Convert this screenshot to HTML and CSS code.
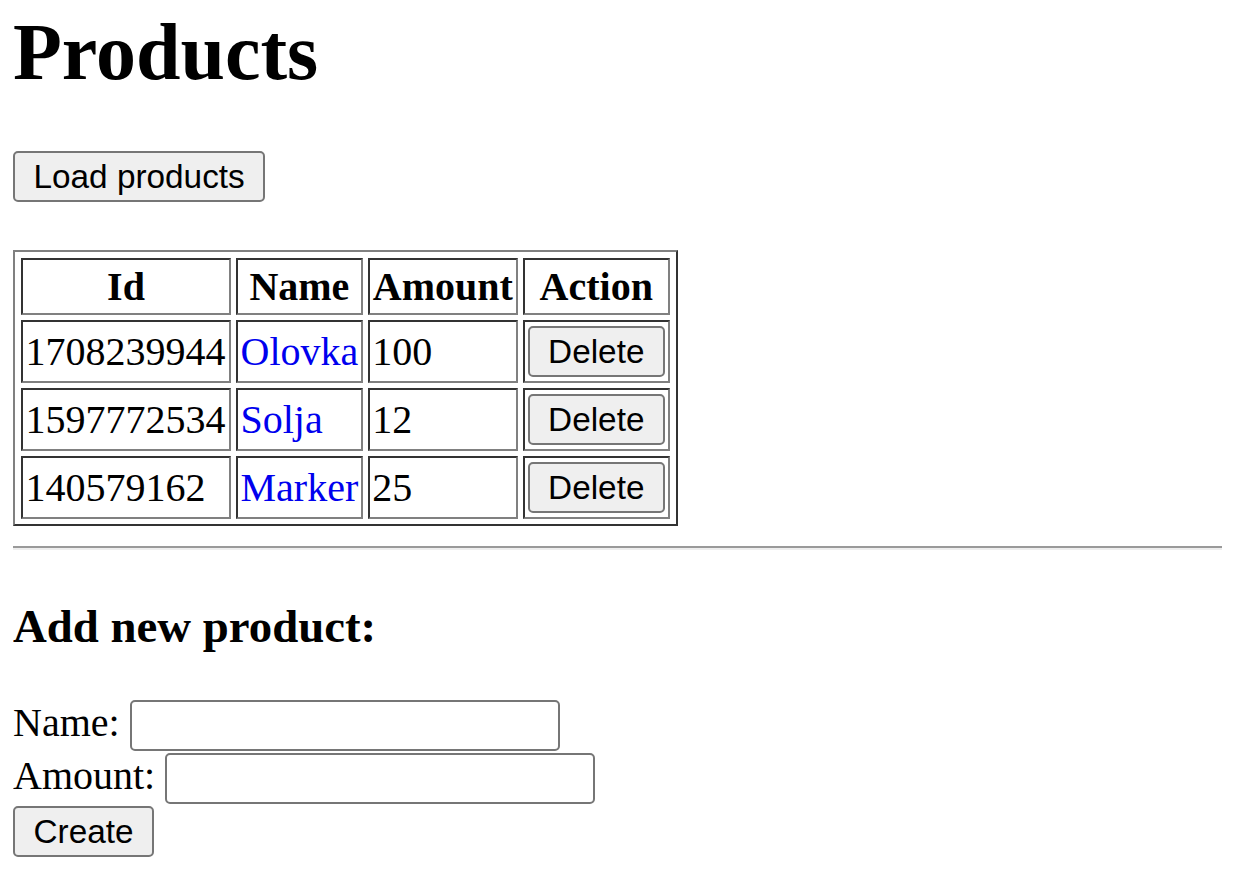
FILE: index.html
```html
<!DOCTYPE html>
<html lang="en">
<head>
<meta charset="utf-8">
<title>Products</title>
<link rel="stylesheet" href="styles.css">
</head>
<body>
<h1 class="title">Products</h1>
<div class="load-row">
  <button class="btn" type="button">Load products</button>
</div>
<table class="products">
  <thead>
    <tr>
      <th class="col-id">Id</th>
      <th class="col-name">Name</th>
      <th class="col-amount">Amount</th>
      <th class="col-action">Action</th>
    </tr>
  </thead>
  <tbody>
    <tr>
      <td>1708239944</td>
      <td><a class="name-link" href="#">Olovka</a></td>
      <td>100</td>
      <td><button class="btn" type="button">Delete</button></td>
    </tr>
    <tr>
      <td>1597772534</td>
      <td><a class="name-link" href="#">Solja</a></td>
      <td>12</td>
      <td><button class="btn" type="button">Delete</button></td>
    </tr>
    <tr>
      <td>140579162</td>
      <td><a class="name-link" href="#">Marker</a></td>
      <td>25</td>
      <td><button class="btn" type="button">Delete</button></td>
    </tr>
  </tbody>
</table>
<hr class="divider">
<h3 class="subtitle">Add new product:</h3>
<form class="add-form">
  <div class="field">
    <label class="field-label" for="name">Name:</label>
    <input class="field-input" id="name" type="text">
  </div>
  <div class="field">
    <label class="field-label" for="amount">Amount:</label>
    <input class="field-input" id="amount" type="text">
  </div>
  <div class="field">
    <button class="btn" type="button">Create</button>
  </div>
</form>
</body>
</html>
```

FILE: styles.css
```css
html {
  background: #ffffff;
}

body {
  margin: 0 13px;
  font-family: "Liberation Serif", "Times New Roman", serif;
  font-size: 40px;
  color: #000000;
}

.title {
  margin: 6px 0 0;
  font-size: 80px;
  line-height: 92px;
  font-weight: bold;
}

.load-row {
  display: flex;
  margin-top: 53px;
}

.btn {
  box-sizing: border-box;
  height: 51px;
  padding: 0 18.5px;
  font-family: "Liberation Sans", Arial, sans-serif;
  font-size: 33.33px;
  line-height: normal;
  color: #000000;
  background: #efefef;
  border: 2px solid #767676;
  border-radius: 5px;
}

.products {
  margin-top: 48px;
  border-collapse: separate;
  border-spacing: 5px;
  border-style: solid;
  border-width: 2px;
  border-color: #808080 #333333 #333333 #808080;
  padding: 1px 1px 0 1px;
}

.products th,
.products td {
  padding: 3.5px 2.5px;
  border-style: solid;
  border-width: 2px;
  border-color: #333333 #808080 #808080 #333333;
  line-height: 46px;
  vertical-align: middle;
}

.products td {
  padding-top: 4px;
  padding-bottom: 4px;
  text-align: left;
}

.products th {
  font-weight: bold;
  text-align: center;
}

.col-id {
  width: 201px;
}

.col-name {
  width: 117px;
}

.col-amount {
  width: 141px;
}

.col-action {
  width: 138px;
}

.products .btn {
  display: block;
  margin: 0 auto;
}

.name-link {
  color: #0000ee;
  text-decoration: none;
}

.divider {
  margin: 20px 0 0;
  height: 0;
  border: none;
  border-top: 2px solid #9a9a9a;
  border-bottom: 2px solid #eeeeee;
}

.subtitle {
  margin: 49px 0 0;
  font-size: 46.8px;
  line-height: 54px;
  font-weight: bold;
}

.add-form {
  margin-top: 47px;
  display: flex;
  flex-direction: column;
  gap: 2px;
}

.field {
  display: flex;
  align-items: flex-start;
  gap: 10px;
}

.field-label {
  line-height: 46px;
}

.field-input {
  box-sizing: border-box;
  width: 430px;
  height: 51px;
  padding: 0 5px;
  font-family: "Liberation Sans", Arial, sans-serif;
  font-size: 33.33px;
  background: #ffffff;
  border: 2px solid #767676;
  border-radius: 5px;
}
```
